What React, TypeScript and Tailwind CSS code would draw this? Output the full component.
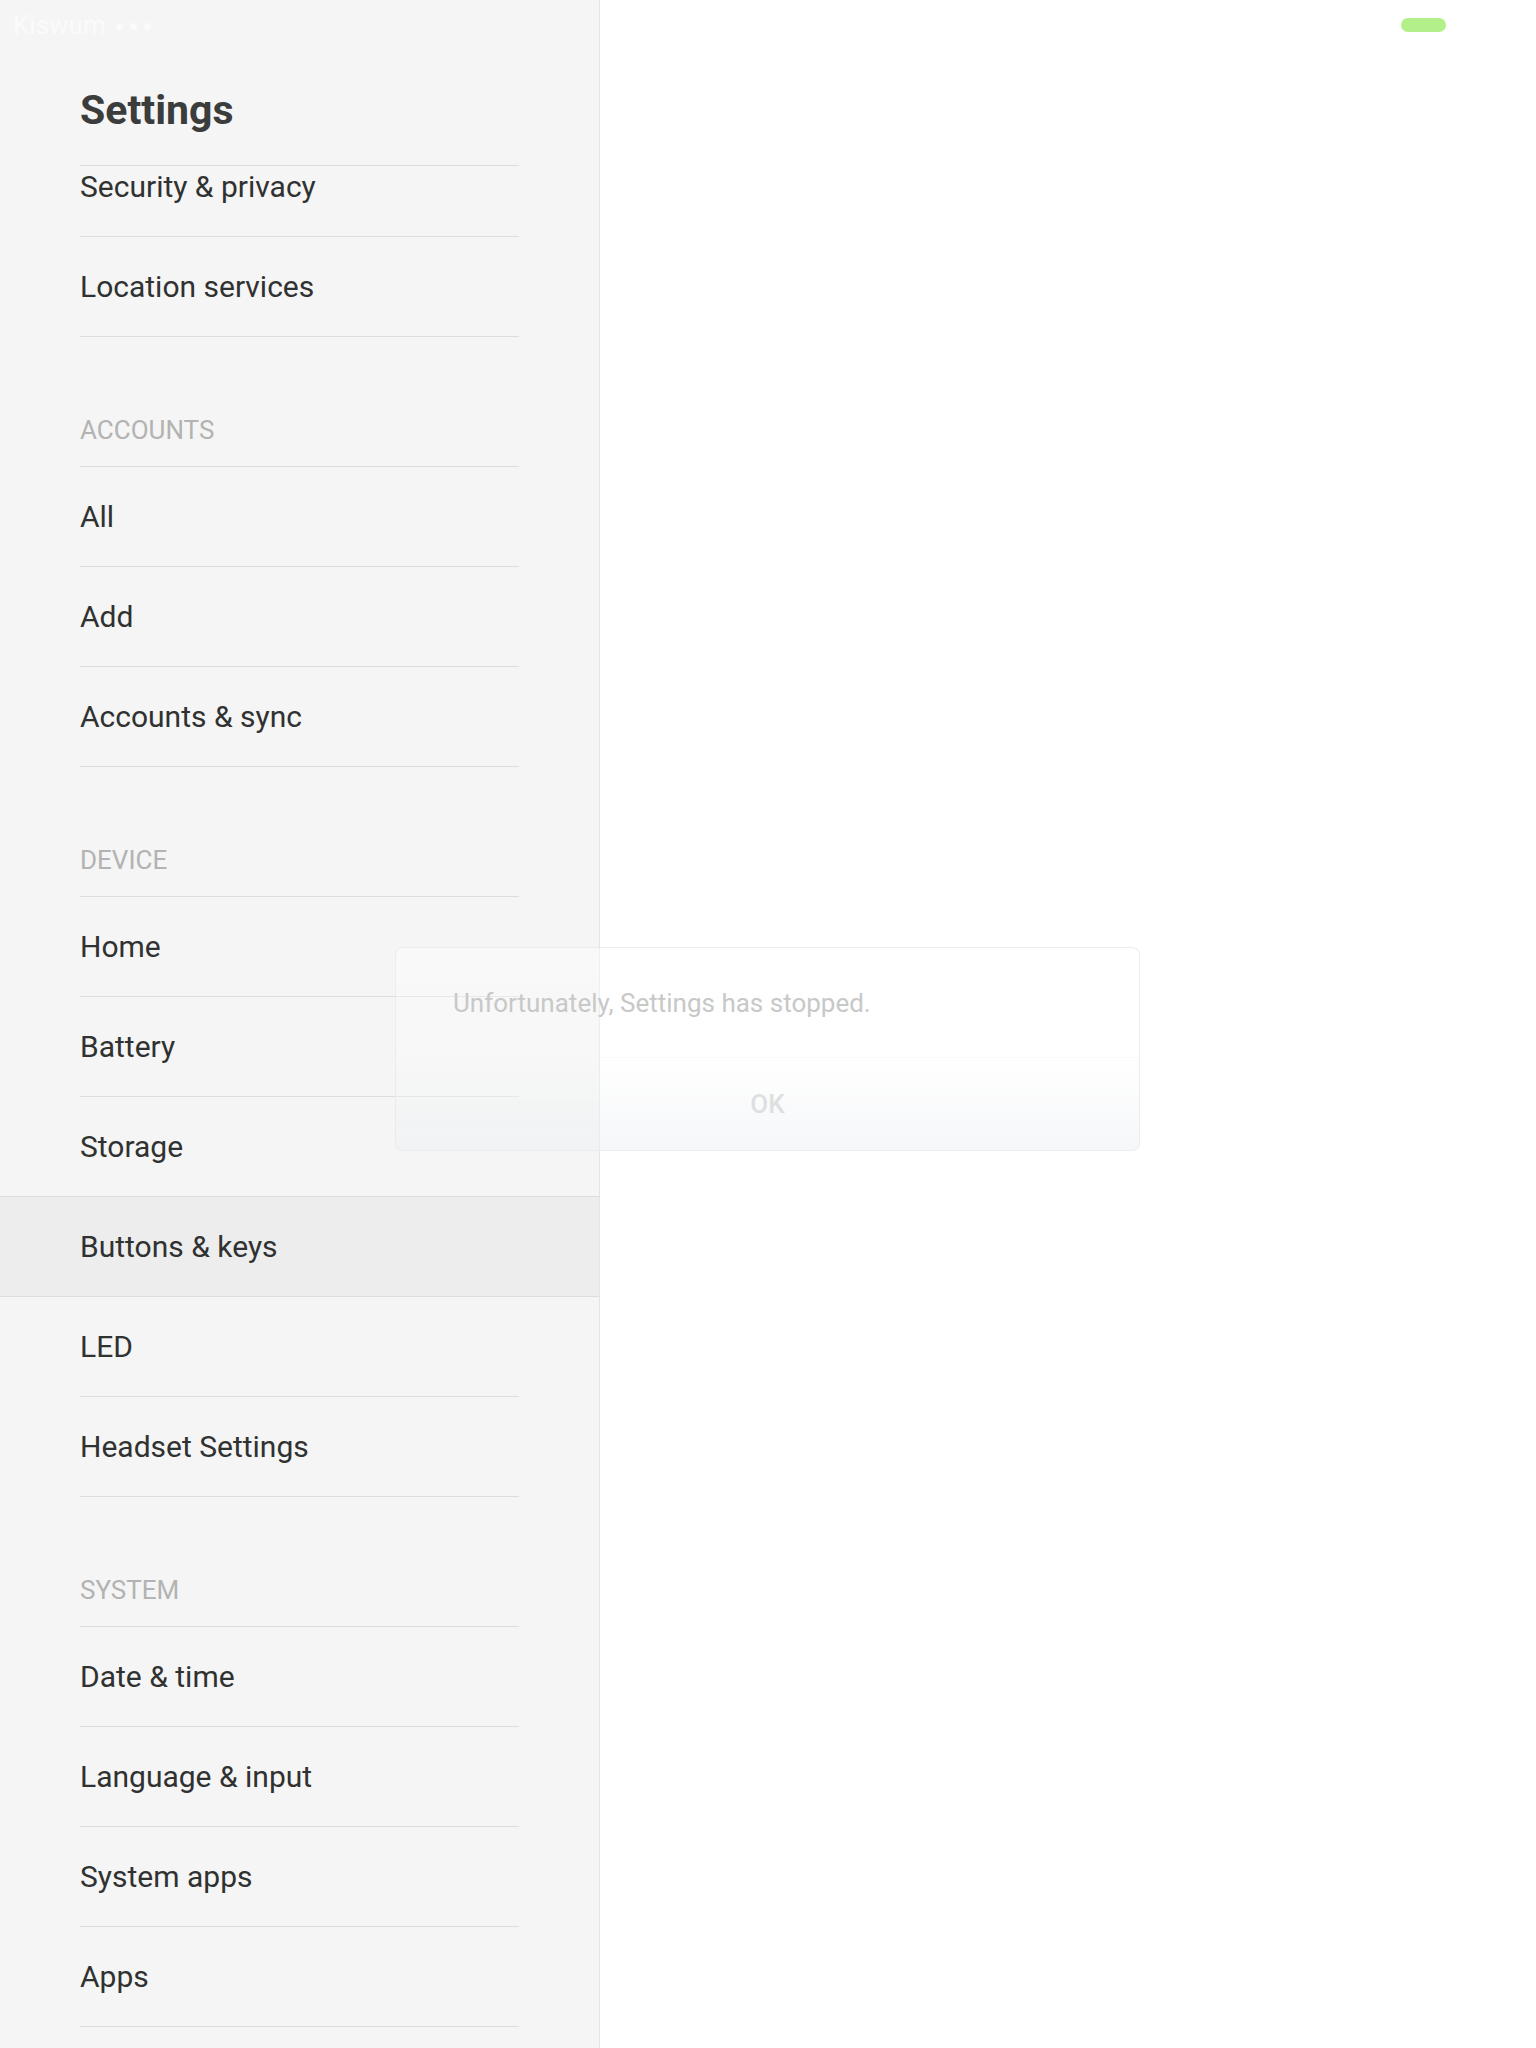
import React from "react";

type Row =
  | { kind: "item"; label: string; highlight?: boolean; fullBottom?: boolean; clipped?: boolean }
  | { kind: "section"; label: string };

const rows: Row[] = [
  { kind: "item", label: "Security & privacy", clipped: true },
  { kind: "item", label: "Location services" },
  { kind: "section", label: "ACCOUNTS" },
  { kind: "item", label: "All" },
  { kind: "item", label: "Add" },
  { kind: "item", label: "Accounts & sync" },
  { kind: "section", label: "DEVICE" },
  { kind: "item", label: "Home" },
  { kind: "item", label: "Battery" },
  { kind: "item", label: "Storage", fullBottom: true },
  { kind: "item", label: "Buttons & keys", highlight: true },
  { kind: "item", label: "LED" },
  { kind: "item", label: "Headset Settings" },
  { kind: "section", label: "SYSTEM" },
  { kind: "item", label: "Date & time" },
  { kind: "item", label: "Language & input" },
  { kind: "item", label: "System apps" },
  { kind: "item", label: "Apps" },
];

function ItemRow({ row }: { row: Extract<Row, { kind: "item" }> }) {
  if (row.highlight) {
    return (
      <div className="shrink-0 h-[100px] w-full border-b border-[#dcdddc] bg-[#ecedec] flex items-center px-[80px]">
        <span className="text-[30px] leading-[36px] text-[#303131]">{row.label}</span>
      </div>
    );
  }
  if (row.fullBottom) {
    return (
      <div className="shrink-0 h-[100px] w-full border-b border-[#dcdddc] flex items-center px-[80px]">
        <span className="text-[30px] leading-[36px] text-[#303131]">{row.label}</span>
      </div>
    );
  }
  return (
    <div className={`shrink-0 w-full px-[80px] ${row.clipped ? "-mt-[29px]" : ""}`}>
      <div className="h-[100px] border-b border-[#dcdddc] flex items-center">
        <span className="text-[30px] leading-[36px] text-[#303131]">{row.label}</span>
      </div>
    </div>
  );
}

function SectionRow({ label }: { label: string }) {
  return (
    <div className="shrink-0 w-full px-[80px]">
      <div className="h-[130px] border-b border-[#dcdddc] flex items-end pb-[21px]">
        <span className="text-[26px] leading-[30px] text-[#b2b3b2]">{label}</span>
      </div>
    </div>
  );
}

export default function App() {
  return (
    <div
      className="relative w-[1536px] h-[2048px] overflow-hidden bg-white flex"
      style={{ fontFamily: "Roboto, 'Noto Sans', 'Liberation Sans', sans-serif" }}
    >
      {/* Left settings panel */}
      <div className="w-[600px] h-full bg-[#f4f5f4] border-r border-[#e3e4e3] flex flex-col">
        <div className="px-[80px] shrink-0">
          <div className="h-[166px] border-b border-[#dcdddc] pt-[86px]">
            <h1 className="text-[41px] leading-[48px] font-bold text-[#3b3c3c]">Settings</h1>
          </div>
        </div>
        <div className="flex-1 min-h-0 overflow-hidden flex flex-col">
          {rows.map((r, i) =>
            r.kind === "item" ? <ItemRow key={i} row={r} /> : <SectionRow key={i} label={r.label} />
          )}
        </div>
      </div>

      {/* Right detail pane */}
      <div className="flex-1 h-full bg-white" />

      {/* Status bar overlay */}
      <div className="absolute top-0 left-0 right-0 h-[50px] flex items-start">
        <div className="flex items-center gap-[8px] pl-[13px] pt-[10px]">
          <span className="text-[26px] leading-[30px] text-[#fafbfa]">Kiswum</span>
          <div className="flex items-center gap-[7px] ml-[2px] mt-[2px]">
            <span className="w-[7px] h-[7px] rounded-full bg-[#fafbfa]" />
            <span className="w-[7px] h-[7px] rounded-full bg-[#fafbfa]" />
            <span className="w-[7px] h-[7px] rounded-full bg-[#fafbfa]" />
          </div>
        </div>
        <div className="absolute left-[1401px] top-[18px] w-[45px] h-[14px] rounded-full bg-[#b4f08a]" />
      </div>

      {/* Fading crash dialog */}
      <div className="absolute left-[395px] top-[947px] w-[745px] h-[204px] rounded-[8px] border border-[#e6e7e8]/70 bg-gradient-to-b from-white/40 via-white/30 to-[#eef0f4]/50 flex flex-col">
        <div className="h-[110px] border-b border-[#f6f7f8]/60 flex items-center pl-[57px]">
          <span className="text-[26px] leading-[30px] text-[#c7c8c8]">Unfortunately, Settings has stopped.</span>
        </div>
        <div className="flex-1 flex items-center justify-center">
          <span className="text-[26px] leading-[30px] font-medium text-[#dedfe0]">OK</span>
        </div>
      </div>
    </div>
  );
}
